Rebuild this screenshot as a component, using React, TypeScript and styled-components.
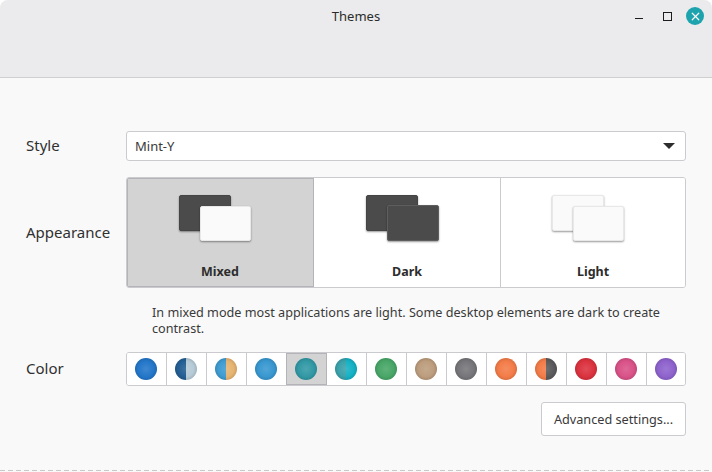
import React from 'react'
import styled, { createGlobalStyle } from 'styled-components'
import { X } from 'lucide-react'

const GlobalStyle = createGlobalStyle`
  html, body {
    margin: 0;
    padding: 0;
    width: 712px;
    height: 472px;
    overflow: hidden;
    background: #ffffff;
  }
`

const StyledWindow = styled.div`
  width: 712px;
  height: 472px;
  display: flex;
  flex-direction: column;
  background: #f9f9f9;
  border-radius: 8px 8px 0 0;
  overflow: hidden;
  font-family: 'Noto Sans', 'Open Sans', sans-serif;
  color: #303030;
`

const StyledHeader = styled.header`
  position: relative;
  height: 78px;
  flex-shrink: 0;
  box-sizing: border-box;
  background: #ebebed;
  border-bottom: 1px solid #cfcfd1;
`

const StyledTitle = styled.div`
  padding-top: 8px;
  text-align: center;
  font-size: 13px;
  line-height: 17px;
  color: #2b2b2b;
`

const StyledWindowButtons = styled.div`
  position: absolute;
  top: 7px;
  right: 8px;
  display: flex;
  align-items: flex-start;
`

const StyledMinimize = styled.span`
  width: 8px;
  height: 1px;
  margin-top: 11px;
  margin-right: 20px;
  background: #1c1c1c;
`

const StyledMaximize = styled.span`
  width: 9px;
  height: 9px;
  box-sizing: border-box;
  margin-top: 5px;
  margin-right: 14px;
  border: 1px solid #1c1c1c;
`

const StyledClose = styled.span`
  width: 18px;
  height: 18px;
  border-radius: 50%;
  background: #1ca3ad;
  color: #ffffff;
  display: flex;
  align-items: center;
  justify-content: center;
`

const StyledBody = styled.main`
  flex: 1;
  display: flex;
  flex-direction: column;
  padding: 53px 26px 0;
`

const StyledRow = styled.div<{ $top?: number }>`
  display: flex;
  align-items: center;
  margin-top: ${({ $top }) => $top ?? 0}px;
`

const StyledLabel = styled.div`
  width: 100px;
  flex-shrink: 0;
  padding-bottom: 2px;
  font-size: 15px;
  color: #303030;
`

const StyledSelect = styled.div`
  flex: 1;
  height: 30px;
  box-sizing: border-box;
  display: flex;
  align-items: center;
  justify-content: space-between;
  padding: 0 10px 0 8px;
  background: #ffffff;
  border: 1px solid #cbcbcf;
  border-radius: 3px;
  font-size: 13px;
  color: #3a3a3a;
`

const StyledCaret = styled.span`
  width: 0;
  height: 0;
  border-left: 6px solid transparent;
  border-right: 6px solid transparent;
  border-top: 6px solid #2d2d2d;
`

const StyledModes = styled.div`
  flex: 1;
  height: 111px;
  box-sizing: border-box;
  display: grid;
  grid-template-columns: 187px 187px 1fr;
  background: #ffffff;
  border: 1px solid #cbcbcf;
  border-radius: 3px;
  overflow: hidden;
`

const StyledMode = styled.div<{ $selected?: boolean }>`
  display: flex;
  flex-direction: column;
  align-items: center;
  box-sizing: border-box;
  padding-top: 17px;
  background: ${({ $selected }) => ($selected ? '#d3d3d3' : '#ffffff')};
  border-right: 1px solid ${({ $selected }) => ($selected ? '#b4b4b8' : '#cbcbcf')};
  outline: ${({ $selected }) => ($selected ? '1px solid #b4b4b8' : 'none')};
  outline-offset: -1px;

  &:last-child {
    border-right: none;
  }
`

const StyledPreview = styled.div`
  position: relative;
  width: 73px;
  height: 47px;
  margin-right: 10px;
`

const StyledPane = styled.span<{ $tone: 'dark' | 'light'; $front?: boolean }>`
  position: absolute;
  box-sizing: border-box;
  left: ${({ $front }) => ($front ? '21px' : '0')};
  top: ${({ $front, $tone }) => ($front ? ($tone === 'light' ? '11px' : '10px') : '0')};
  width: ${({ $front, $tone }) => ($front && $tone === 'light' ? '51px' : '52px')};
  height: ${({ $front, $tone }) => ($front && $tone === 'light' ? '35px' : '36px')};
  border-radius: 2px;
  background: ${({ $tone }) => ($tone === 'dark' ? '#4b4b4b' : '#fafafa')};
  border: 1px solid
    ${({ $tone, $front }) => ($tone === 'light' ? '#e8e8e8' : $front ? '#5e5e5e' : '#444444')};
  box-shadow: 0 1px 2px rgba(0, 0, 0, 0.4);
`

const StyledModeName = styled.div`
  margin-top: 21px;
  font-size: 12.5px;
  font-weight: 700;
  line-height: 17px;
  color: #2d2d2d;
`

const StyledHelp = styled.p`
  margin: 16px 0 0 126px;
  font-size: 12.65px;
  line-height: 16px;
  color: #3a3a3a;
`

const StyledSwatches = styled.div`
  flex: 1;
  height: 34px;
  box-sizing: border-box;
  display: grid;
  grid-template-columns: repeat(13, 40px) 1fr;
  background: #ffffff;
  border: 1px solid #cbcbcf;
  border-radius: 3px;
  overflow: hidden;
`

const StyledSwatch = styled.div<{ $selected?: boolean }>`
  display: flex;
  align-items: center;
  justify-content: center;
  box-sizing: border-box;
  margin-left: ${({ $selected }) => ($selected ? '-1px' : '0')};
  padding-left: ${({ $selected }) => ($selected ? '1px' : '0')};
  padding-right: 1px;
  background: ${({ $selected }) => ($selected ? '#d3d3d3' : '#ffffff')};
  border-right: 1px solid #cbcbcf;
  outline: ${({ $selected }) => ($selected ? '1px solid #b4b4b8' : 'none')};
  outline-offset: -1px;

  &:last-child {
    border-right: none;
  }
`

const StyledOrb = styled.span<{ $left: string; $right?: string }>`
  position: relative;
  width: 22px;
  height: 22px;
  border-radius: 50%;
  overflow: hidden;
  background: ${({ $left, $right }) =>
    $right ? `linear-gradient(90deg, ${$left} 50%, ${$right} 50%)` : $left};

  &::after {
    content: '';
    position: absolute;
    inset: 0;
    border-radius: 50%;
    background: radial-gradient(
      circle at 50% 50%,
      rgba(255, 255, 255, 0.14) 0%,
      rgba(255, 255, 255, 0.02) 50%,
      rgba(0, 0, 0, 0.28) 100%
    );
  }
`

const StyledFooter = styled.div`
  display: flex;
  justify-content: flex-end;
  margin-top: 16px;
`

const StyledButton = styled.button`
  width: 145px;
  height: 34px;
  padding: 0;
  background: #ffffff;
  border: 1px solid #cbcbcf;
  border-radius: 3px;
  font-family: inherit;
  font-size: 12.7px;
  color: #3a3a3a;
`

const StyledDashes = styled.div`
  margin: auto -26px 1px;
  height: 1px;
  background: repeating-linear-gradient(90deg, #c8c8c8 0 5px, transparent 5px 8px);
`

const MODES = [
  { name: 'Mixed', back: 'dark', front: 'light', selected: true },
  { name: 'Dark', back: 'dark', front: 'dark', selected: false },
  { name: 'Light', back: 'light', front: 'light', selected: false },
] as const

const SWATCHES: { left: string; right?: string; selected?: boolean }[] = [
  { left: '#1f74c8' },
  { left: '#1f5c92', right: '#b4cad6' },
  { left: '#3c9ad0', right: '#e6b36f' },
  { left: '#3596cf' },
  { left: '#2e97a3', selected: true },
  { left: '#37a0aa', right: '#10b0c4' },
  { left: '#45a565' },
  { left: '#bb9b7b' },
  { left: '#747478' },
  { left: '#f37a45' },
  { left: '#f37a45', right: '#58585a' },
  { left: '#da2f3b' },
  { left: '#d84f86' },
  { left: '#8c60cc' },
]

const App: React.FC = () => {
  return (
    <StyledWindow>
      <GlobalStyle />
      <StyledHeader>
        <StyledTitle>Themes</StyledTitle>
        <StyledWindowButtons>
          <StyledMinimize />
          <StyledMaximize />
          <StyledClose>
            <X size={13} strokeWidth={2.2} />
          </StyledClose>
        </StyledWindowButtons>
      </StyledHeader>

      <StyledBody>
        <StyledRow>
          <StyledLabel>Style</StyledLabel>
          <StyledSelect>
            Mint-Y
            <StyledCaret />
          </StyledSelect>
        </StyledRow>

        <StyledRow $top={16}>
          <StyledLabel>Appearance</StyledLabel>
          <StyledModes>
            {MODES.map(({ name, back, front, selected }) => (
              <StyledMode key={name} $selected={selected}>
                <StyledPreview>
                  <StyledPane $tone={back} />
                  <StyledPane $tone={front} $front />
                </StyledPreview>
                <StyledModeName>{name}</StyledModeName>
              </StyledMode>
            ))}
          </StyledModes>
        </StyledRow>

        <StyledHelp>
          In mixed mode most applications are light. Some desktop elements are dark to create
          contrast.
        </StyledHelp>

        <StyledRow $top={16}>
          <StyledLabel>Color</StyledLabel>
          <StyledSwatches>
            {SWATCHES.map(({ left, right, selected }, index) => (
              <StyledSwatch key={index} $selected={selected}>
                <StyledOrb $left={left} $right={right} />
              </StyledSwatch>
            ))}
          </StyledSwatches>
        </StyledRow>

        <StyledFooter>
          <StyledButton>Advanced settings...</StyledButton>
        </StyledFooter>

        <StyledDashes />
      </StyledBody>
    </StyledWindow>
  )
}

export default App
